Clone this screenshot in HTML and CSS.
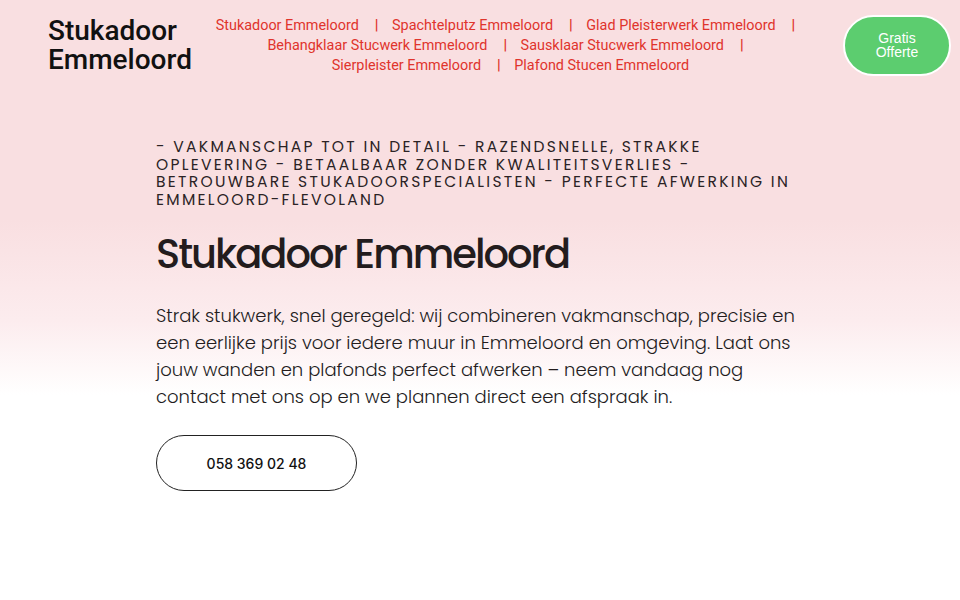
FILE: index.html
```html
<!DOCTYPE html>
<html lang="nl">
<head>
<meta charset="utf-8">
<title>Stukadoor Emmeloord</title>
<link rel="stylesheet" href="styles.css">
</head>
<body>
<div class="page">
  <header class="header">
    <div class="logo">Stukadoor<br>Emmeloord</div>
    <nav class="nav">
      <a class="nav-link sep" href="#">Stukadoor Emmeloord</a>
      <a class="nav-link sep" href="#">Spachtelputz Emmeloord</a>
      <a class="nav-link sep" href="#">Glad Pleisterwerk Emmeloord</a>
      <a class="nav-link sep" href="#">Behangklaar Stucwerk Emmeloord</a>
      <a class="nav-link sep" href="#">Sausklaar Stucwerk Emmeloord</a>
      <a class="nav-link sep" href="#">Sierpleister Emmeloord</a>
      <a class="nav-link" href="#">Plafond Stucen Emmeloord</a>
    </nav>
    <a class="cta" href="#">Gratis<br>Offerte</a>
  </header>
  <main class="hero">
    <div class="hero-inner">
      <p class="tagline">- Vakmanschap tot in detail - Razendsnelle, strakke oplevering - Betaalbaar zonder kwaliteitsverlies - Betrouwbare stukadoorspecialisten - Perfecte afwerking in Emmeloord-Flevoland</p>
      <h1 class="title">Stukadoor Emmeloord</h1>
      <p class="intro">Strak stukwerk, snel geregeld: wij combineren vakmanschap, precisie en een eerlijke prijs voor iedere muur in Emmeloord en omgeving. Laat ons jouw wanden en plafonds perfect afwerken – neem vandaag nog contact met ons op en we plannen direct een afspraak in.</p>
      <a class="phone" href="#">058 369 02 48</a>
    </div>
  </main>
</div>
</body>
</html>
```
FILE: styles.css
```css
* { box-sizing: border-box; }
html, body { margin: 0; padding: 0; }
body {
  background: #fff;
  font-family: "Poppins", "Inter", "Open Sans", sans-serif;
  color: #222;
}
.page {
  min-height: 600px;
  background: linear-gradient(to bottom, #f9dfe1 0, #f9dfe1 220px, #fcecee 320px, #ffffff 395px);
}
.header {
  display: flex;
  align-items: center;
  padding: 14px 9px 0 48px;
  height: 76px;
}
.logo {
  font-family: Roboto, "Liberation Sans", sans-serif;
  font-weight: 500;
  font-size: 28px;
  line-height: 29px;
  color: #111;
  width: 160px;
  flex: none;
}
.nav {
  flex: 1;
  text-align: center;
  font-family: Roboto, "Liberation Sans", sans-serif;
  font-size: 14.4px;
  line-height: 20px;
  padding: 2px 30px 0 0;
}
.nav-link {
  color: #e0342c;
  text-decoration: none;
  white-space: nowrap;
}
.nav-link.sep::after {
  content: "|";
  font-weight: 700;
  margin: 0 10px 0 16px;
}
.cta {
  flex: none;
  width: 108px;
  height: 61px;
  border: 2px solid #fff;
  border-radius: 31px;
  background: #5ccd6f;
  color: #fff;
  text-decoration: none;
  font-family: "Liberation Sans", Arial, sans-serif;
  font-size: 14px;
  line-height: 14px;
  display: flex;
  align-items: center;
  justify-content: center;
  text-align: center;
}
.hero-inner {
  width: 648px;
  margin: 0 auto;
  padding-top: 62px;
}
.tagline {
  margin: 0;
  text-transform: uppercase;
  font-size: 15.5px;
  line-height: 17.6px;
  letter-spacing: 2.3px;
  color: #2b2325;
}
.title {
  margin: 22px 0 0;
  font-size: 40px;
  font-weight: 500;
  line-height: 48px;
  letter-spacing: -2px;
  color: #231c1d;
}
.intro {
  margin: 24px 0 0;
  font-size: 18px;
  font-weight: 300;
  line-height: 27px;
  color: #231c1d;
}
.phone {
  display: flex;
  align-items: center;
  justify-content: center;
  width: 201px;
  height: 56px;
  margin-top: 25px;
  border: 1px solid #222;
  border-radius: 28px;
  color: #111;
  text-decoration: none;
  font-family: Inter, Roboto, sans-serif;
  font-size: 14px;
  font-weight: 500;
}
```
